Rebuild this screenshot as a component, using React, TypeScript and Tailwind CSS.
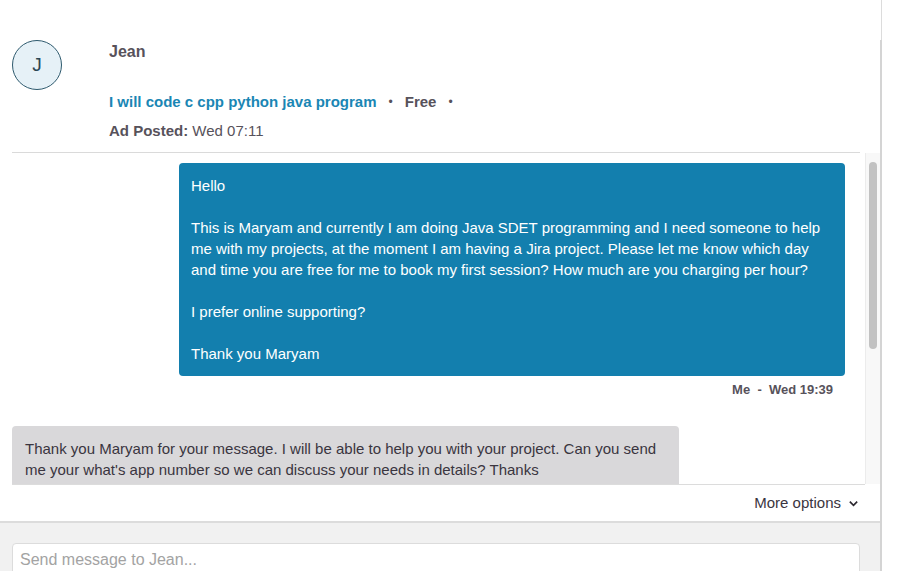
import React from "react";

export default function App() {
  return (
    <div
      className="w-[900px] h-[571px] overflow-hidden bg-white flex"
      style={{ fontFamily: '"Liberation Sans", Arial, sans-serif' }}
    >
      {/* main panel */}
      <div className="w-[880px] h-full flex flex-col">
        {/* header */}
        <div className="flex pt-[40px] pl-3 h-[152px] shrink-0">
          <div className="w-[50px] h-[50px] rounded-full border border-[#2e5a6e] bg-[#e6f1f7] flex items-center justify-center text-[19px] text-[#2b4655]">
            J
          </div>
          <div className="ml-[47px] flex flex-col pt-[2px]">
            <div className="h-[20px] leading-[20px] text-[16px] font-bold text-[#57525b]">Jean</div>
            <div className="mt-[30px] h-[20px] leading-[20px] text-[15px] flex items-center">
              <span className="font-bold text-[#1a86b4]">I will code c cpp python java program</span>
              <span className="mx-[12px] text-[#57525b] text-[12px]">•</span>
              <span className="font-bold text-[#57525b]">Free</span>
              <span className="mx-[12px] text-[#57525b] text-[12px]">•</span>
            </div>
            <div className="mt-[9px] h-[20px] leading-[20px] text-[15px] text-[#57525b]">
              <span className="font-bold">Ad Posted:</span> Wed 07:11
            </div>
          </div>
        </div>
        <div className="ml-3 mr-[20px] h-px bg-[#dadada] shrink-0" />

        {/* scroll area */}
        <div className="flex h-[331px] shrink-0 overflow-hidden">
          <div className="flex-1 overflow-hidden pt-[10px]">
            <div className="ml-[179px] mr-[20px] bg-[#137fae] rounded-[4px] px-3 py-3 text-white text-[15px] leading-[21px]">
              <p>Hello</p>
              <p>&nbsp;</p>
              <p>
                This is Maryam and currently I am doing Java SDET programming and I need someone to help me with my
                projects, at the moment I am having a Jira project. Please let me know which day and time you are
                free for me to book my first session? How much are you charging per hour?
              </p>
              <p>&nbsp;</p>
              <p>I prefer online supporting?</p>
              <p>&nbsp;</p>
              <p>Thank you Maryam</p>
            </div>
            <div className="mr-[32px] mt-[7px] text-right text-[13px] leading-[14px] font-bold text-[#57525b]">
              Me&nbsp;&nbsp;-&nbsp;&nbsp;Wed 19:39
            </div>
            <div className="ml-3 mt-[29px] w-[667px] bg-[#d9d8da] rounded-t-[4px] pl-[13px] pr-3 pt-[12px] pb-3 text-[15px] leading-[21px] text-[#3a3540]">
              Thank you Maryam for your message. I will be able to help you with your project. Can you send me your
              what's app number so we can discuss your needs in details? Thanks
            </div>
          </div>
          {/* scrollbar */}
          <div className="w-[15px] h-full bg-[#f8f8f8] border-l border-[#ececec] flex justify-center pt-[9px]">
            <div className="w-[8px] h-[187px] rounded-full bg-[#c2c2c2]" />
          </div>
        </div>

        {/* more options */}
        <div className="ml-3 mr-[15px] h-px bg-[#dcdcdc] shrink-0" />
        <div className="h-[36px] shrink-0 flex items-center justify-end pr-[21px] text-[15px] text-[#3a3540]">
          <span>More options</span>
          <svg width="11" height="11" viewBox="0 0 12 12" className="ml-[7px]">
            <path d="M2 4 L6 8 L10 4" fill="none" stroke="#2c2830" strokeWidth="1.8" />
          </svg>
        </div>
        <div className="h-[2px] bg-[#dcdcdc] shrink-0" />
        <div className="flex-1 bg-[#f1f1f1] pt-[20px] pl-3 pr-[20px]">
          <div className="h-[40px] bg-white border border-[#dcdcdc] rounded-[4px] px-[7px] pt-[5px] text-[16px] leading-[22px] text-[#a3a3a3]">
            Send message to Jean...
          </div>
        </div>
      </div>
      {/* right border */}
      <div className="w-[2px] h-full flex flex-col">
        <div className="h-[40px] flex justify-end">
          <div className="w-px h-full bg-[#dcdcdc]" />
        </div>
        <div className="flex-1 bg-[#d4d4d4]" />
      </div>
    </div>
  );
}
